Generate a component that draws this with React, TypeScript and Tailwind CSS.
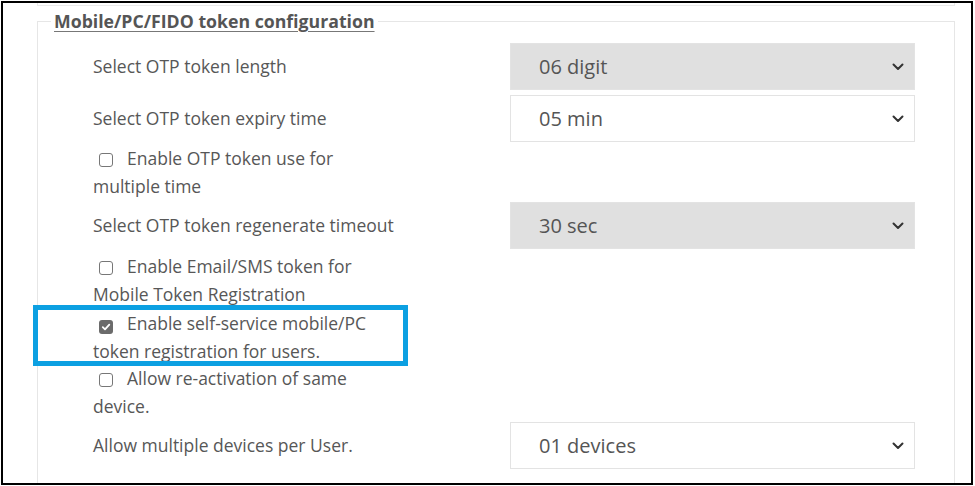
import React from "react";

const font = { fontFamily: '"Open Sans", "Noto Sans", sans-serif' };

function Chevron() {
  return (
    <svg width="12" height="8" viewBox="0 0 12 8" className="shrink-0">
      <path d="M1.5 1.5 L6 6 L10.5 1.5" fill="none" stroke="#333" strokeWidth="2" strokeLinecap="round" strokeLinejoin="round" />
    </svg>
  );
}

function Select({ value, disabled }: { value: string; disabled?: boolean }) {
  return (
    <div
      className={
        "ml-auto flex h-[47px] w-[405px] items-center justify-between border pl-[28px] pr-[10px] text-[20px] text-[#555] " +
        (disabled ? "border-[#e3e3e3] bg-[#e0e0e0]" : "border-[#e3e3e3] bg-white")
      }
    >
      <span>{value}</span>
      <Chevron />
    </div>
  );
}

function Box({ checked }: { checked?: boolean }) {
  return (
    <span
      className={
        "ml-[6px] mr-[14px] inline-flex h-[14px] w-[14px] translate-y-[2px] items-center justify-center rounded-[3px] align-baseline " +
        (checked ? "bg-[#6b6b6b]" : "border-[1.5px] border-[#777] bg-white")
      }
    >
      {checked && (
        <svg width="10" height="10" viewBox="0 0 10 10">
          <path d="M1.8 5.2 L4 7.4 L8.3 2.6" fill="none" stroke="white" strokeWidth="1.8" strokeLinecap="round" strokeLinejoin="round" />
        </svg>
      )}
    </span>
  );
}

function Row({ label, value, disabled, className = "" }: { label: string; value: string; disabled?: boolean; className?: string }) {
  return (
    <div className={"flex items-center " + className}>
      <div className="w-[308px]">{label}</div>
      <Select value={value} disabled={disabled} />
    </div>
  );
}

function Check({ text, checked, className = "" }: { text: string; checked?: boolean; className?: string }) {
  return (
    <div className={"w-[308px] leading-[27.5px] " + className}>
      <Box checked={checked} />
      {text}
    </div>
  );
}

export default function App() {
  return (
    <div className="h-[486px] w-[975px] bg-white p-px text-[17.5px] text-[#575757]" style={font}>
      <div className="relative h-[484px] w-[972px] overflow-hidden border-2 border-black">
        <div className="ml-[34px] h-[3px] w-[918px] border-x border-b border-[#eaeaea]" />
        <fieldset className="ml-[34px] mt-[4px] h-[520px] w-[918px] border border-[#e6e6e6] pl-[55px] pr-[39px]">
          <legend className="-ml-[42px] px-[3px] text-[17.7px] font-bold leading-[22px] text-[#555] underline decoration-[#777] underline-offset-[3px]">
            Mobile/PC/FIDO token configuration
          </legend>
          <Row className="mt-[11px]" label="Select OTP token length" value="06 digit" disabled />
          <Row className="mt-[5px]" label="Select OTP token expiry time" value="05 min" />
          <Check className="mt-[3px]" text="Enable OTP token use for multiple time" />
          <Row className="mt-[2px]" label="Select OTP token regenerate timeout" value="30 sec" disabled />
          <Check className="mt-[4px]" text="Enable Email/SMS token for Mobile Token Registration" />
          <Check className="mt-[2px]" text="Enable self-service mobile/PC token registration for users." checked />
          <Check text="Allow re-activation of same device." />
          <Row className="mt-[2px]" label="Allow multiple devices per User." value="01 devices" />
        </fieldset>
        <div className="pointer-events-none absolute left-[30px] top-[302px] h-[61px] w-[375px] border-[5px] border-[#0ca0e2]" />
      </div>
    </div>
  );
}
